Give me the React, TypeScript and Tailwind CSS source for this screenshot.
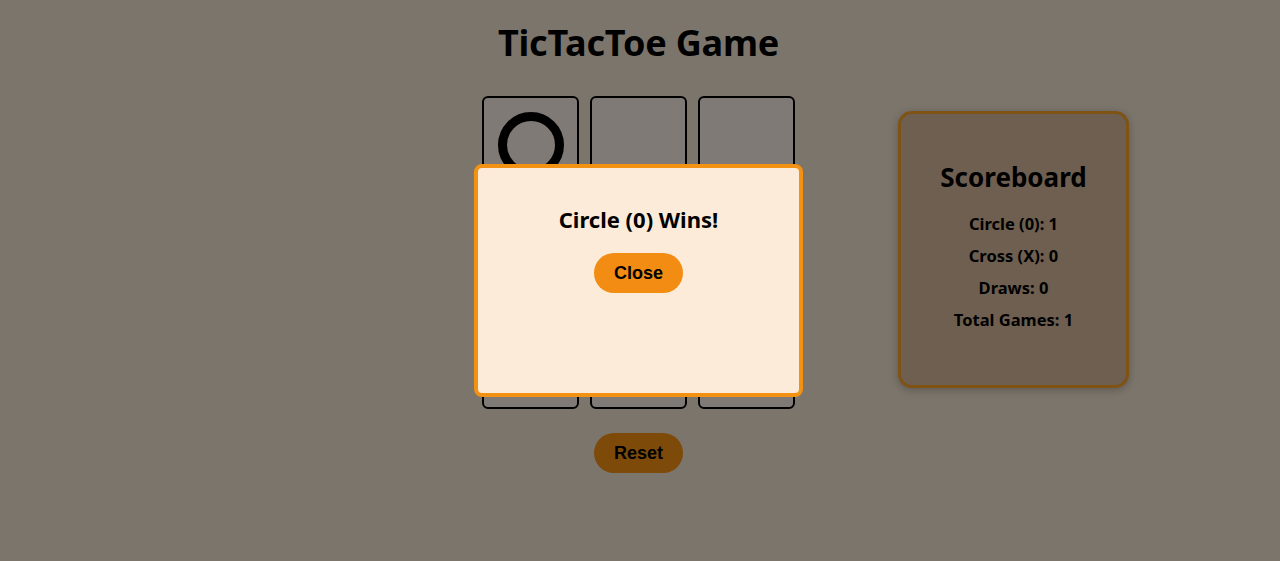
import { useState } from "react";

type Cell = "O" | "X" | null;

export default function App() {
  const [board] = useState<Cell[]>(["O", null, null, null, null, null, null, null, null]);
  const [showModal, setShowModal] = useState(true);

  return (
    <div className="min-h-[561px] w-full pr-[3px] bg-[#7c756c] text-black font-['Noto_Sans',sans-serif]">
      <h1 className="pt-[22px] text-center text-[36px] font-bold leading-[42px] tracking-[-0.2px]">TicTacToe Game</h1>

      <div className="mt-[32px] grid grid-cols-[1fr_auto_1fr]">
        <div />
        <div className="flex flex-col items-center">
          <div className="grid grid-cols-[97px_97px_97px] gap-[11px]">
            {board.map((cell, i) => (
              <div
                key={i}
                className="flex h-[97px] w-[97px] items-center justify-center rounded-[6px] border-2 border-black bg-[#807a77]"
              >
                {cell === "O" && (
                  <div className="h-[66px] w-[66px] rounded-full border-[9px] border-black" />
                )}
              </div>
            ))}
          </div>
          <button className="mt-[24px] h-[40px] w-[89px] rounded-full bg-[#7d4a0a] font-['Liberation_Sans',sans-serif] text-[18px] font-bold">
            Reset
          </button>
        </div>
        <div>
          <div className="ml-[103px] mt-[15px] flex h-[277px] w-[231px] flex-col items-center rounded-[14px] border-[3px] border-[#7e5314] bg-[#6e5f50] shadow-[0_2px_8px_rgba(0,0,0,0.25)]">
            <h2 className="mt-[45px] text-[26px] font-bold leading-[36px]">Scoreboard</h2>
            <div className="mt-[18px] flex flex-col items-center gap-[10px] text-[16.5px] font-bold leading-[22px]">
              <p>Circle (0): 1</p>
              <p>Cross (X): 0</p>
              <p>Draws: 0</p>
              <p>Total Games: 1</p>
            </div>
          </div>
        </div>
      </div>

      {showModal && (
        <div className="fixed inset-0 pr-[3px] flex items-center justify-center">
          <div className="flex h-[233px] w-[329px] flex-col items-center rounded-[8px] border-4 border-[#f39212] bg-[#fbebd8]">
            <h3 className="mt-[36px] text-[22px] font-bold leading-[30px]">Circle (0) Wins!</h3>
            <button
              onClick={() => setShowModal(false)}
              className="mt-[19px] h-[40px] w-[89px] rounded-full bg-[#f28c12] font-['Liberation_Sans',sans-serif] text-[18px] font-bold"
            >
              Close
            </button>
          </div>
        </div>
      )}
    </div>
  );
}
